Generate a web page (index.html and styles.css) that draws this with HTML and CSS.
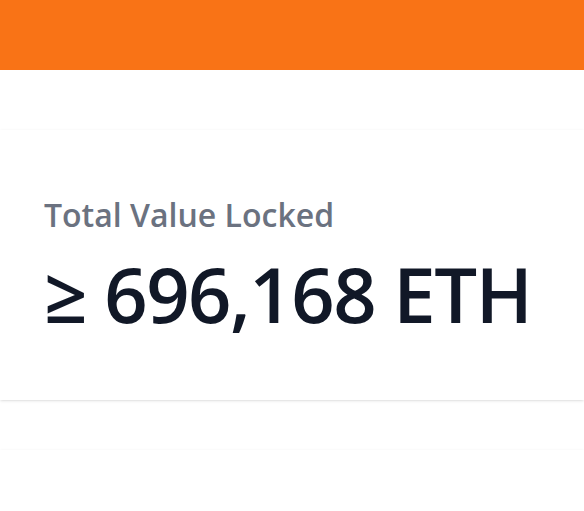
FILE: index.html
```html
<!DOCTYPE html>
<html>
<head>
<meta charset="utf-8">
<link rel="stylesheet" href="styles.css">
</head>
<body>
<header class="topbar"></header>
<main class="content">
  <section class="card">
    <div class="label">Total Value Locked</div>
    <div class="value">≥ 696,168 ETH</div>
  </section>
  <section class="card card-next"></section>
</main>
</body>
</html>
```
FILE: styles.css
```css
html, body {
  margin: 0;
  padding: 0;
  background: #ffffff;
  font-family: "Open Sans", "Noto Sans", sans-serif;
}
.topbar {
  height: 70px;
  background: #f97316;
}
.content {
  padding-top: 60px;
  display: flex;
  flex-direction: column;
  gap: 50px;
}
.card {
  background: #ffffff;
  box-shadow: 0 1px 3px 0 rgba(0,0,0,0.1), 0 1px 2px -1px rgba(0,0,0,0.1);
  padding: 66px 44px 60px;
  height: 270px;
  box-sizing: border-box;
}
.label {
  font-size: 32px;
  line-height: 38px;
  font-weight: 600;
  color: #6b7280;
}
.value {
  margin-top: 22px;
  font-size: 76px;
  line-height: 76px;
  color: #111827;
  font-weight: 600;
  letter-spacing: -1.5px;
  white-space: nowrap;
}
.card-next {
  height: 100px;
}
```
